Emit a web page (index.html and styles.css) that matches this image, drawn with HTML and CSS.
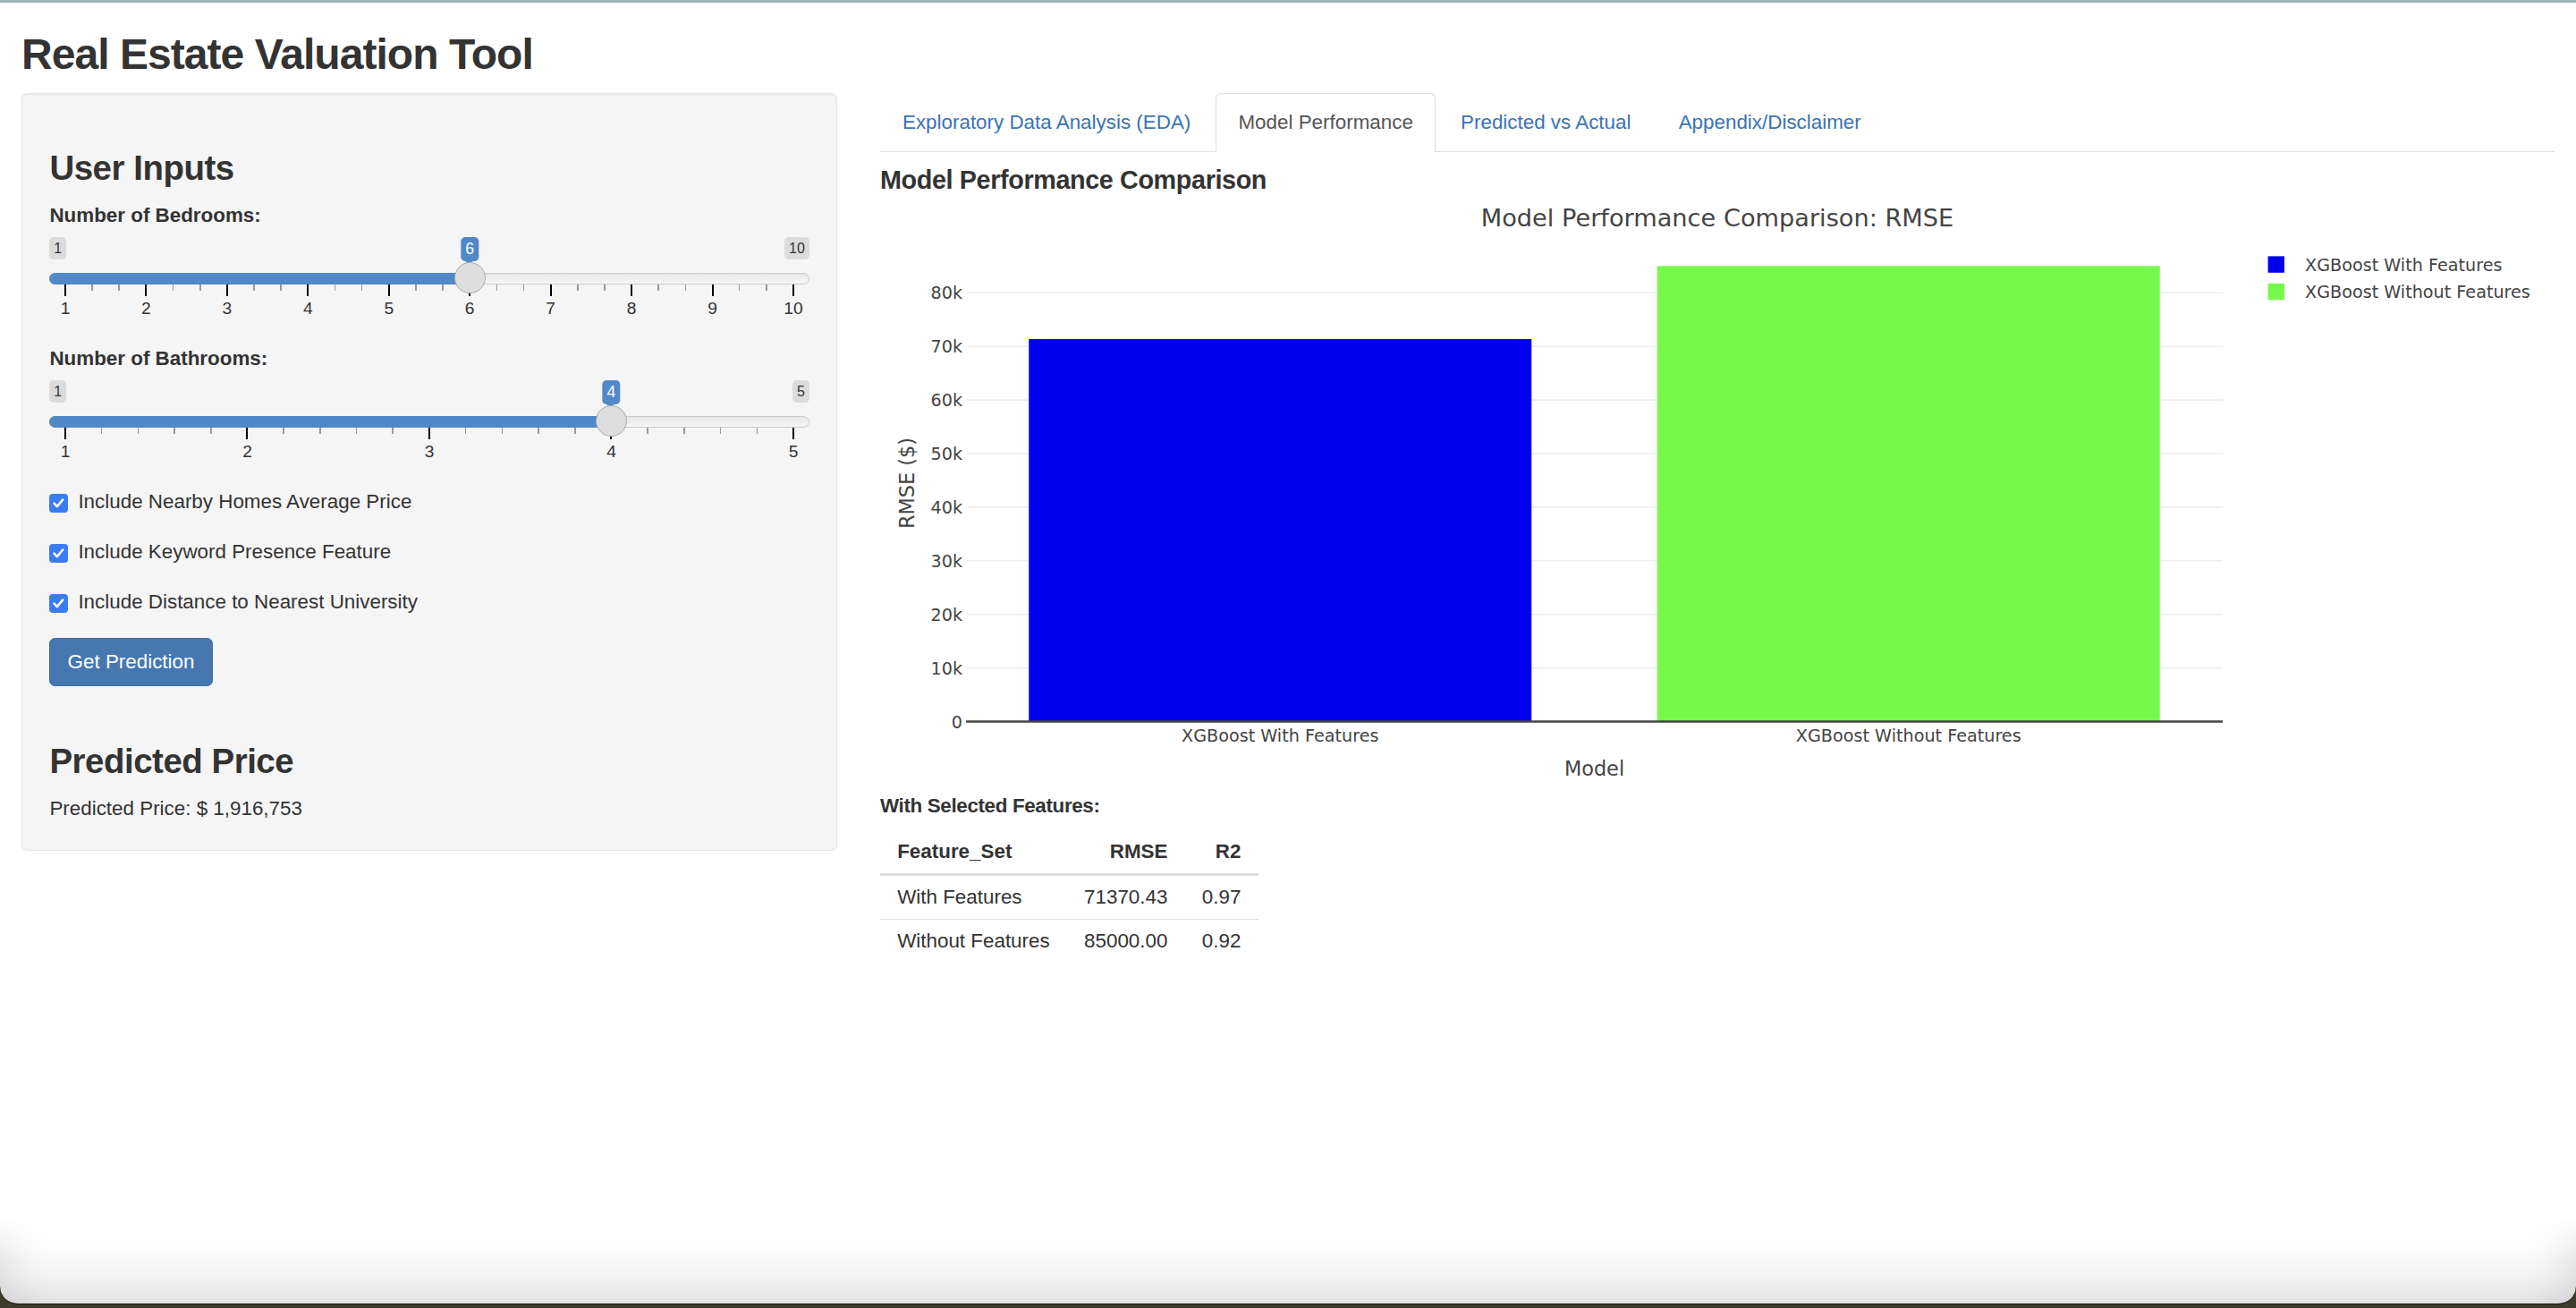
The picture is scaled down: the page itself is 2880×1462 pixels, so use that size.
FILE: index.html
```html
<!DOCTYPE html>
<html lang="en">
<head>
<meta charset="utf-8">
<title>Real Estate Valuation Tool</title>
<link rel="stylesheet" href="styles.css">
</head>
<body>
<div class="container">
  <h2 class="app-title">Real Estate Valuation Tool</h2>
  <div class="row">
    <div class="col-side">
      <div class="well">
        <h3 class="section-title">User Inputs</h3>

        <div class="form-group">
          <label class="control-label">Number of Bedrooms:</label>
          <div class="irs" style="--p:0.555556">
            <span class="irs-line"></span>
            <span class="irs-bar"></span>
            <span class="irs-min">1</span>
            <span class="irs-max">10</span>
            <span class="irs-single">6</span>
            <span class="irs-handle"></span>
            <span class="irs-grid">
              <span class="pol" style="--t:0"></span><span class="grid-text" style="--t:0">1</span>
              <span class="pol small" style="--t:0.037037"></span>
              <span class="pol small" style="--t:0.074074"></span>
              <span class="pol" style="--t:0.111111"></span><span class="grid-text" style="--t:0.111111">2</span>
              <span class="pol small" style="--t:0.148148"></span>
              <span class="pol small" style="--t:0.185185"></span>
              <span class="pol" style="--t:0.222222"></span><span class="grid-text" style="--t:0.222222">3</span>
              <span class="pol small" style="--t:0.259259"></span>
              <span class="pol small" style="--t:0.296296"></span>
              <span class="pol" style="--t:0.333333"></span><span class="grid-text" style="--t:0.333333">4</span>
              <span class="pol small" style="--t:0.370370"></span>
              <span class="pol small" style="--t:0.407407"></span>
              <span class="pol" style="--t:0.444444"></span><span class="grid-text" style="--t:0.444444">5</span>
              <span class="pol small" style="--t:0.481481"></span>
              <span class="pol small" style="--t:0.518519"></span>
              <span class="pol" style="--t:0.555556"></span><span class="grid-text" style="--t:0.555556">6</span>
              <span class="pol small" style="--t:0.592593"></span>
              <span class="pol small" style="--t:0.629630"></span>
              <span class="pol" style="--t:0.666667"></span><span class="grid-text" style="--t:0.666667">7</span>
              <span class="pol small" style="--t:0.703704"></span>
              <span class="pol small" style="--t:0.740741"></span>
              <span class="pol" style="--t:0.777778"></span><span class="grid-text" style="--t:0.777778">8</span>
              <span class="pol small" style="--t:0.814815"></span>
              <span class="pol small" style="--t:0.851852"></span>
              <span class="pol" style="--t:0.888889"></span><span class="grid-text" style="--t:0.888889">9</span>
              <span class="pol small" style="--t:0.925926"></span>
              <span class="pol small" style="--t:0.962963"></span>
              <span class="pol" style="--t:1"></span><span class="grid-text" style="--t:1">10</span>
            </span>
          </div>
        </div>

        <div class="form-group">
          <label class="control-label">Number of Bathrooms:</label>
          <div class="irs" style="--p:0.75">
            <span class="irs-line"></span>
            <span class="irs-bar"></span>
            <span class="irs-min">1</span>
            <span class="irs-max">5</span>
            <span class="irs-single">4</span>
            <span class="irs-handle"></span>
            <span class="irs-grid">
              <span class="pol" style="--t:0"></span><span class="grid-text" style="--t:0">1</span>
              <span class="pol small" style="--t:0.05"></span>
              <span class="pol small" style="--t:0.10"></span>
              <span class="pol small" style="--t:0.15"></span>
              <span class="pol small" style="--t:0.20"></span>
              <span class="pol" style="--t:0.25"></span><span class="grid-text" style="--t:0.25">2</span>
              <span class="pol small" style="--t:0.30"></span>
              <span class="pol small" style="--t:0.35"></span>
              <span class="pol small" style="--t:0.40"></span>
              <span class="pol small" style="--t:0.45"></span>
              <span class="pol" style="--t:0.5"></span><span class="grid-text" style="--t:0.5">3</span>
              <span class="pol small" style="--t:0.55"></span>
              <span class="pol small" style="--t:0.60"></span>
              <span class="pol small" style="--t:0.65"></span>
              <span class="pol small" style="--t:0.70"></span>
              <span class="pol" style="--t:0.75"></span><span class="grid-text" style="--t:0.75">4</span>
              <span class="pol small" style="--t:0.80"></span>
              <span class="pol small" style="--t:0.85"></span>
              <span class="pol small" style="--t:0.90"></span>
              <span class="pol small" style="--t:0.95"></span>
              <span class="pol" style="--t:1"></span><span class="grid-text" style="--t:1">5</span>
            </span>
          </div>
        </div>

        <label class="checkbox">
          <span class="check-box"><svg viewBox="0 0 21 21" width="21" height="21"><path d="M5.6 10.8 L8.9 14.2 L15.4 6.6" /></svg></span>
          <span>Include Nearby Homes Average Price</span>
        </label>
        <label class="checkbox">
          <span class="check-box"><svg viewBox="0 0 21 21" width="21" height="21"><path d="M5.6 10.8 L8.9 14.2 L15.4 6.6" /></svg></span>
          <span>Include Keyword Presence Feature</span>
        </label>
        <label class="checkbox">
          <span class="check-box"><svg viewBox="0 0 21 21" width="21" height="21"><path d="M5.6 10.8 L8.9 14.2 L15.4 6.6" /></svg></span>
          <span>Include Distance to Nearest University</span>
        </label>

        <div class="action">
          <button class="btn-primary" type="button">Get Prediction</button>
        </div>

        <h3 class="section-title result-title">Predicted Price</h3>
        <div class="result-text">Predicted Price: $ 1,916,753</div>
      </div>
    </div>

    <div class="col-main">
      <ul class="nav-tabs">
        <li><a href="#">Exploratory Data Analysis (EDA)</a></li>
        <li class="active"><a href="#">Model Performance</a></li>
        <li><a href="#">Predicted vs Actual</a></li>
        <li><a href="#">Appendix/Disclaimer</a></li>
      </ul>
      <div class="tab-content">
        <h4 class="panel-title">Model Performance Comparison</h4>
        <div class="chart">
          <svg class="plot" viewBox="0 0 1872 640" width="1872" height="640">
            <text class="plot-title" x="936" y="19.5" text-anchor="middle">Model Performance Comparison: RMSE</text>
            <g class="gridlines">
              <line x1="96" x2="1501" y1="513.6" y2="513.6"/>
              <line x1="96" x2="1501" y1="453.7" y2="453.7"/>
              <line x1="96" x2="1501" y1="393.8" y2="393.8"/>
              <line x1="96" x2="1501" y1="333.9" y2="333.9"/>
              <line x1="96" x2="1501" y1="274.0" y2="274.0"/>
              <line x1="96" x2="1501" y1="214.1" y2="214.1"/>
              <line x1="96" x2="1501" y1="154.2" y2="154.2"/>
              <line x1="96" x2="1501" y1="94.3" y2="94.3"/>
            </g>
            <rect class="bar-blue" x="166.25" y="146" width="562" height="427.5"/>
            <rect class="bar-green" x="868.75" y="64.35" width="562" height="509.15"/>
            <line class="zeroline" x1="96" x2="1501" y1="573.5" y2="573.5"/>
            <g class="ytick" text-anchor="end">
              <text x="92" y="580.5">0</text>
              <text x="92" y="520.6">10k</text>
              <text x="92" y="460.7">20k</text>
              <text x="92" y="400.8">30k</text>
              <text x="92" y="340.9">40k</text>
              <text x="92" y="281.0">50k</text>
              <text x="92" y="221.1">60k</text>
              <text x="92" y="161.2">70k</text>
              <text x="92" y="101.3">80k</text>
            </g>
            <g class="xtick" text-anchor="middle">
              <text x="447.25" y="595.5">XGBoost With Features</text>
              <text x="1149.75" y="595.5">XGBoost Without Features</text>
            </g>
            <text class="axis-title" x="798.5" y="633.5" text-anchor="middle">Model</text>
            <text class="axis-title" x="0" y="0" text-anchor="middle" transform="translate(37.5 307) rotate(-90)">RMSE ($)</text>
            <g class="legend">
              <rect class="bar-blue" x="1551.6" y="53.4" width="18.4" height="18.4"/>
              <text x="1593" y="69.6">XGBoost With Features</text>
              <rect class="bar-green" x="1551.6" y="83.8" width="18.4" height="18.4"/>
              <text x="1593" y="100">XGBoost Without Features</text>
            </g>
          </svg>
        </div>
        <h5 class="table-title">With Selected Features:</h5>
        <table class="perf-table">
          <thead>
            <tr><th class="left">Feature_Set</th><th>RMSE</th><th>R2</th></tr>
          </thead>
          <tbody>
            <tr><td class="left">With Features</td><td>71370.43</td><td>0.97</td></tr>
            <tr><td class="left">Without Features</td><td>85000.00</td><td>0.92</td></tr>
          </tbody>
        </table>
      </div>
    </div>
  </div>
</div>

<div class="desktop-strip"></div>
<div class="window-foot"></div>
</body>
</html>
```

FILE: styles.css
```css
* { box-sizing: border-box; }

html, body { margin: 0; padding: 0; }

body {
  font-family: "Liberation Sans", Arial, Helvetica, sans-serif;
  font-size: 22.4px;
  line-height: 32px;
  color: #333;
  background: #fff;
  border-top: 3px solid #9fb5b9;
  min-height: 100vh;
}

.container { padding: 0 24px; }

.app-title {
  font-size: 48px;
  line-height: 1.1;
  font-weight: 700;
  letter-spacing: -0.95px;
  margin: 32px 0 16px;
}

.row { display: flex; margin: 0 -24px; }
.col-side { flex: 0 0 33.3333%; padding: 0 24px; }
.col-main { flex: 0 0 66.6667%; padding: 0 24px; }

/* ---------- sidebar ---------- */
.well {
  background: #f5f5f5;
  border: 1px solid #e3e3e3;
  border-radius: 6.4px;
  padding: 30.4px;
  box-shadow: inset 0 1.6px 1.6px rgba(0, 0, 0, 0.05);
}

.section-title {
  font-size: 38.4px;
  line-height: 1.1;
  font-weight: 700;
  letter-spacing: -0.45px;
  margin: 32px 0 16px;
}

.form-group { margin-bottom: 24px; }

.control-label {
  display: block;
  font-weight: 700;
  margin-bottom: 8px;
}

/* slider */
.irs { position: relative; height: 96px; }

.irs-line {
  position: absolute;
  top: 40px; left: 0; right: 0;
  height: 13px;
  border: 1px solid #cccccc;
  border-radius: 13px;
  background: linear-gradient(to bottom, #dedede -50%, #ffffff 150%);
}

.irs-bar {
  position: absolute;
  top: 40px; left: 0;
  height: 13px;
  width: calc(17.6px + var(--p) * (100% - 35.2px));
  background: #5088c8;
  border-radius: 13px 0 0 13px;
}

.irs-handle {
  position: absolute;
  top: 27.2px;
  left: calc(var(--p) * (100% - 35.2px));
  width: 35.2px;
  height: 35.2px;
  border-radius: 50%;
  border: 1px solid #ababab;
  background: #dedede;
  z-index: 3;
}

.irs-min, .irs-max {
  position: absolute;
  top: 0;
  padding: 1.6px 4.8px;
  font-size: 16px;
  line-height: 1.333;
  background: rgba(0, 0, 0, 0.1);
  border-radius: 4.8px;
  color: #333;
}
.irs-min { left: 0; }
.irs-max { right: 0; }

.irs-single {
  position: absolute;
  top: 0;
  left: calc(17.6px + var(--p) * (100% - 35.2px));
  transform: translateX(-50%);
  padding: 1.6px 4.8px;
  font-size: 17.6px;
  line-height: 1.333;
  background: #5088c8;
  color: #fff;
  border-radius: 4.8px;
  z-index: 2;
}
.irs-single::after {
  content: "";
  position: absolute;
  left: 50%;
  bottom: -8px;
  margin-left: -4.8px;
  border: 4.8px solid transparent;
  border-top-color: #5088c8;
}

.irs-grid {
  position: absolute;
  left: 17.6px; right: 17.6px;
  top: 53px;
  height: 40px;
}

.pol {
  position: absolute;
  top: 0;
  left: calc(var(--t) * 100%);
  width: 2px;
  margin-left: -1px;
  height: 13px;
  background: #000;
}
.pol.small {
  width: 1.6px;
  margin-left: -0.8px;
  height: 7px;
  background: #999;
}

.grid-text {
  position: absolute;
  top: 17px;
  left: calc(var(--t) * 100%);
  transform: translateX(-50%);
  font-size: 19.2px;
  line-height: 19.2px;
  color: #333;
  white-space: nowrap;
}

/* checkboxes */
.checkbox {
  display: block;
  position: relative;
  height: 32px;
  padding-left: 32px;
  margin-bottom: 24px;
}

.check-box {
  position: absolute;
  left: 0;
  top: 6.4px;
  width: 20.8px;
  height: 20.8px;
  border-radius: 4px;
  background: #3a7cf3;
  display: flex;
}
.check-box svg { display: block; width: 20.8px; height: 20.8px; }
.check-box path {
  fill: none;
  stroke: #fff;
  stroke-width: 2.6;
  stroke-linecap: round;
  stroke-linejoin: round;
}

/* button */
.action { display: flex; }

.btn-primary {
  font-family: inherit;
  font-size: 22.4px;
  line-height: 32px;
  padding: 9.6px 19.2px;
  color: #fff;
  background: #4677b0;
  border: 1px solid #3f6ca3;
  border-radius: 6.4px;
  cursor: pointer;
}

.result-title { margin-top: 63px; }

/* ---------- main panel ---------- */
.nav-tabs {
  display: flex;
  list-style: none;
  margin: 0;
  padding: 0;
  border-bottom: 1px solid #ddd;
}
.nav-tabs li { margin-bottom: -1px; }
.nav-tabs a {
  display: block;
  padding: 16px 24px;
  margin-right: 3.2px;
  line-height: 32px;
  border: 1px solid transparent;
  border-radius: 6.4px 6.4px 0 0;
  color: #3a73b5;
  text-decoration: none;
}
.nav-tabs li.active a {
  color: #555;
  background: #fff;
  border-color: #ddd #ddd transparent;
}

.panel-title {
  font-size: 28.8px;
  line-height: 1.1;
  font-weight: 700;
  letter-spacing: -0.4px;
  margin: 16px 0;
}

.chart { height: 640px; }

.plot { display: block; overflow: visible; }
.plot text {
  font-family: "DejaVu Sans", Verdana, sans-serif;
  fill: #444;
}
.plot-title { font-size: 27.2px; }
.gridlines line { stroke: #eeeeee; stroke-width: 1.6; }
.bar-blue { fill: #0000ef; }
.bar-green { fill: #77f94c; }
.zeroline { stroke: #444; stroke-width: 2.4; }
.ytick text, .xtick text, .legend text { font-size: 19.2px; }
.axis-title { font-size: 22.4px; }

.table-title {
  font-size: 22.4px;
  line-height: 1.1;
  font-weight: 700;
  letter-spacing: -0.35px;
  margin: 16px 0 14px;
}

.perf-table {
  border-collapse: collapse;
  margin-bottom: 32px;
}
.perf-table th,
.perf-table td {
  padding: 8px 19.2px;
  line-height: 32px;
  text-align: right;
  white-space: nowrap;
}
.perf-table th {
  font-weight: 700;
  border-bottom: 3.2px solid #ddd;
}
.perf-table td { border-top: 1.6px solid #ddd; }
.perf-table .left { text-align: left; }

/* ---------- window chrome at the bottom ---------- */
.desktop-strip {
  position: fixed;
  left: 0; right: 0; bottom: 0;
  height: 26px;
  background: #3d3b29;
  z-index: 5;
}

.window-foot {
  position: fixed;
  left: 0; right: 0; bottom: 4px;
  height: 100px;
  background: linear-gradient(to bottom, #ffffff 0%, #fdfdfd 35%, #f3f3f3 70%, #e2e2e2 100%);
  border-bottom: 1px solid #151515;
  border-radius: 0 0 20px 20px;
  box-shadow: inset 60px 0 50px -50px rgba(0, 0, 0, 0.10), inset -60px 0 50px -50px rgba(0, 0, 0, 0.10);
  -webkit-mask-image: linear-gradient(to bottom, transparent 0%, #000 45%);
  mask-image: linear-gradient(to bottom, transparent 0%, #000 45%);
  z-index: 6;
}
```
